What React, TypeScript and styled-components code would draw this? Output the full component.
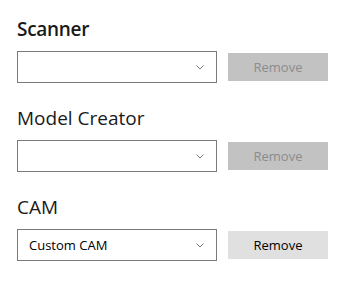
import styled, { createGlobalStyle } from "styled-components";

const GlobalStyle = createGlobalStyle`
  body {
    margin: 0;
    background: #ffffff;
    font-family: "Open Sans", "Noto Sans", sans-serif;
    color: #000000;
  }
`;

const Page = styled.div`
  display: flex;
  flex-direction: column;
  gap: 22px;
  padding: 16px 17px;
`;

const Section = styled.section`
  display: flex;
  flex-direction: column;
  gap: 9px;
`;

const Title = styled.h2<{ $strong?: boolean }>`
  margin: 0;
  font-size: 19px;
  line-height: 26px;
  font-weight: ${(p) => (p.$strong ? 600 : 400)};
  letter-spacing: ${(p) => (p.$strong ? "-0.3px" : "0")};
  color: #1a1a1a;
`;

const Row = styled.div`
  display: flex;
  align-items: center;
  gap: 11px;
`;

const Select = styled.div`
  box-sizing: border-box;
  width: 200px;
  height: 32px;
  border: 1px solid #7a7a7a;
  display: flex;
  align-items: center;
  justify-content: space-between;
  padding: 0 12px 0 11px;
  font-size: 13px;
  color: #000000;
`;

const Chevron = styled.svg`
  width: 8px;
  height: 5px;
  margin-top: 1px;
`;

const Button = styled.button<{ $disabled?: boolean }>`
  width: 100px;
  height: 28px;
  border: none;
  padding: 0;
  font-family: inherit;
  font-size: 13px;
  background: ${(p) => (p.$disabled ? "#c2c2c2" : "#e0e0e0")};
  color: ${(p) => (p.$disabled ? "#8c8c8c" : "#000000")};
`;

const sections = [
  { title: "Scanner", strong: true, value: "", disabled: true },
  { title: "Model Creator", strong: false, value: "", disabled: true },
  { title: "CAM", strong: false, value: "Custom CAM", disabled: false },
];

export default function App() {
  return (
    <>
      <GlobalStyle />
      <Page>
        {sections.map((s) => (
          <Section key={s.title}>
            <Title $strong={s.strong}>{s.title}</Title>
            <Row>
              <Select>
                <span>{s.value}</span>
                <Chevron viewBox="0 0 8 5">
                  <path d="M0.5 0.5 L4 4 L7.5 0.5" fill="none" stroke="#7a7a7a" strokeWidth="1" />
                </Chevron>
              </Select>
              <Button $disabled={s.disabled}>Remove</Button>
            </Row>
          </Section>
        ))}
      </Page>
    </>
  );
}
